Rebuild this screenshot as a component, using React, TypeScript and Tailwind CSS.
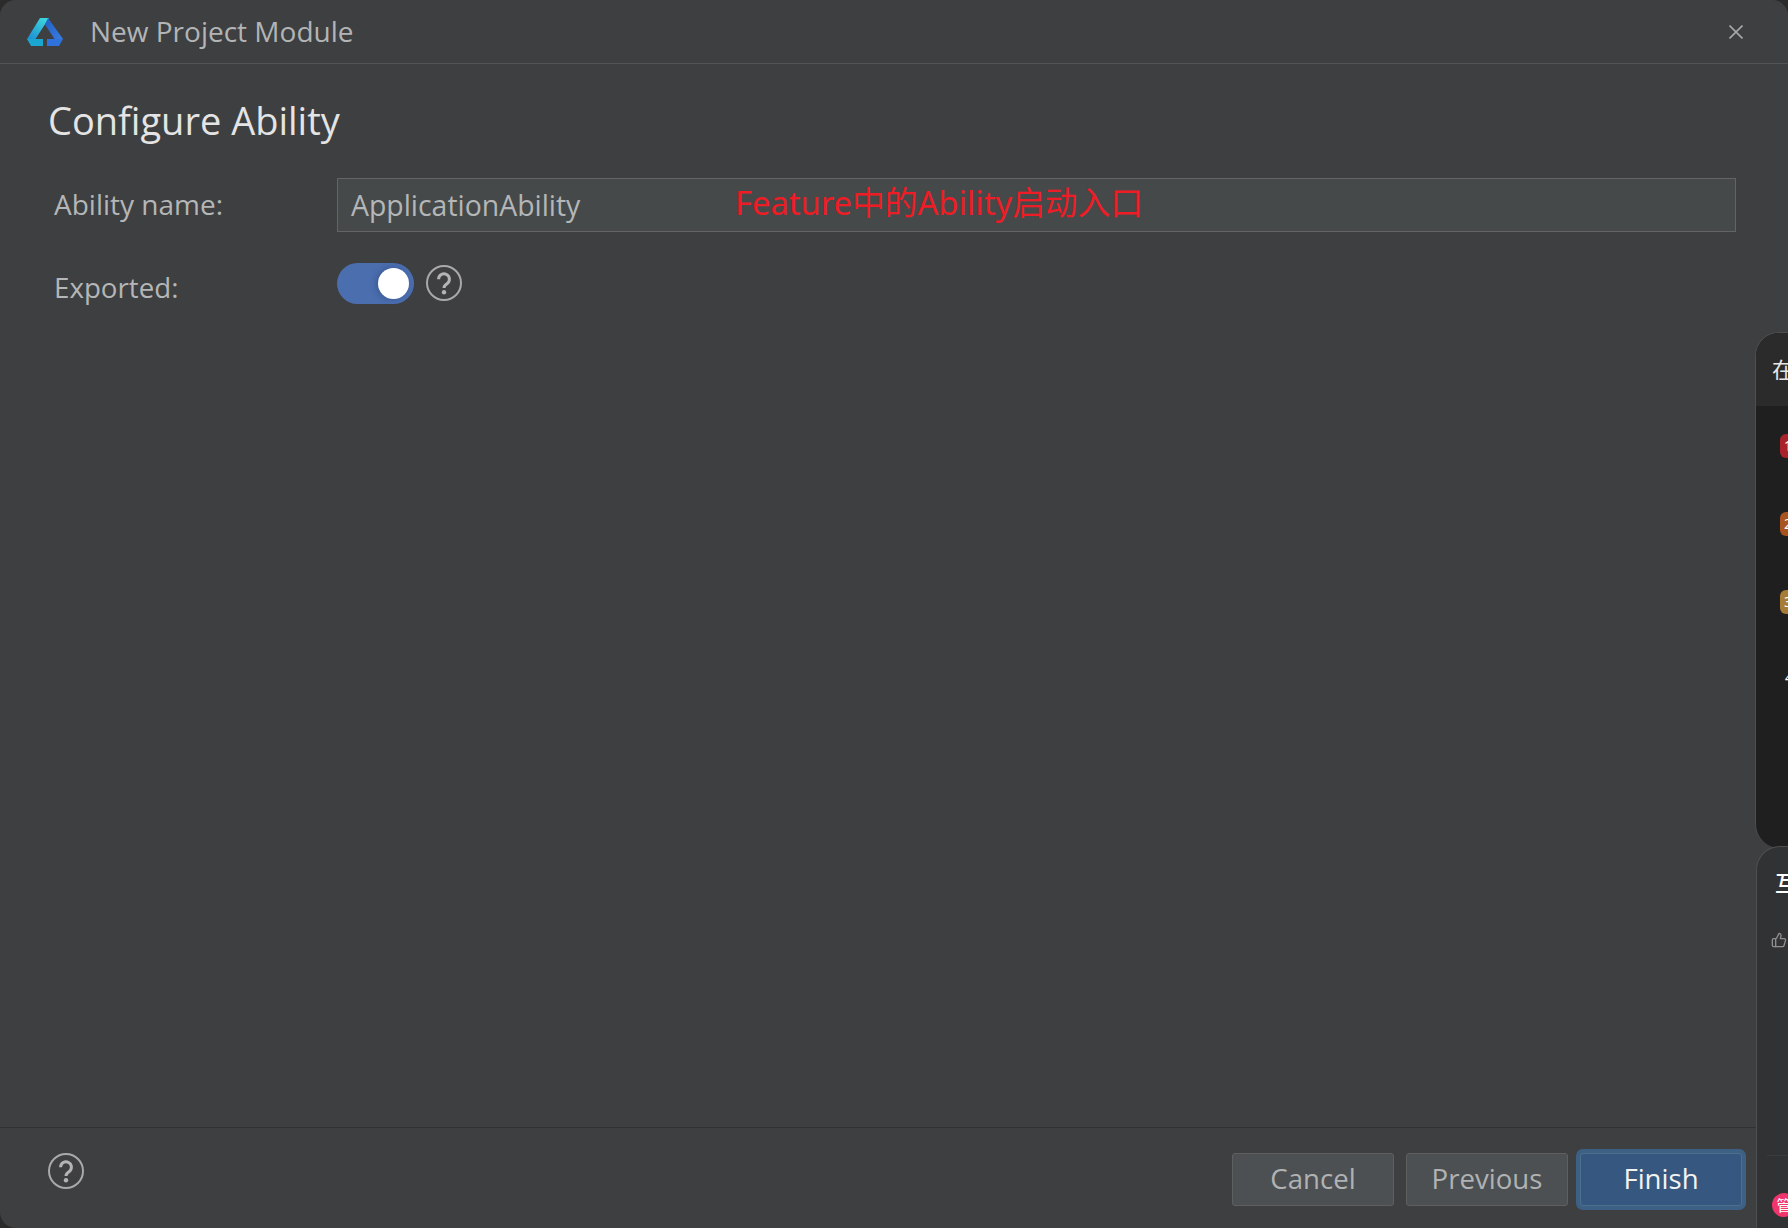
import { ThumbsUp } from 'lucide-react';

const uiFont = 'font-["Open_Sans",sans-serif]';
const cjkFont = 'font-["Noto_Sans","Noto_Sans_CJK_SC",sans-serif]';

function Logo() {
  return (
    <svg width="36" height="29" viewBox="0 0 36 29" className="shrink-0">
      <defs>
        <linearGradient id="leftArm" x1="0.8" y1="0" x2="0.1" y2="1">
          <stop offset="0" stopColor="#3dd6dc" />
          <stop offset="1" stopColor="#1d8fd4" />
        </linearGradient>
        <linearGradient id="rightArm" x1="0" y1="0" x2="1" y2="1">
          <stop offset="0" stopColor="#1f5fc4" />
          <stop offset="1" stopColor="#3a7ce0" />
        </linearGradient>
      </defs>
      <path d="M13 1h9L8.5 22H0z" fill="url(#leftArm)" />
      <path d="M0 22h16v7H4z" fill="#1ba6d0" />
      <path d="M21 1l15 21h-8.5L18 7.5z" fill="url(#rightArm)" />
      <path d="M20 22h16l-4 7H20z" fill="#2f72dc" />
    </svg>
  );
}

function HelpIcon() {
  return (
    <svg width="36" height="36" viewBox="0 0 36 36" fill="none" className="shrink-0">
      <circle cx="18" cy="18" r="17" stroke="#a9a9a9" strokeWidth="2" />
      <path d="M12.6 14.2a5.4 5.4 0 1 1 8.4 4.5c-2.1 1.4-3 2.2-3 4.3" stroke="#b4b4b4" strokeWidth="3" />
      <circle cx="18" cy="27.2" r="2.2" fill="#b4b4b4" />
    </svg>
  );
}

function Badge({ color, label }: { color: string; label: string }) {
  return (
    <div className={`w-8 h-6 rounded-md flex items-center pl-1 text-white text-sm ${color}`}>{label}</div>
  );
}

export default function App() {
  return (
    <div className="relative w-[1788px] h-[1228px] overflow-hidden bg-[#2b2b2b]">
      <div className={`flex flex-col h-full rounded-2xl bg-[#3e3f41] ${uiFont}`}>
        {/* Title bar */}
        <div className="flex items-center h-[64px] shrink-0 pl-[27px] pr-[45px] border-b border-[#525456] bg-[#3d3f41] rounded-t-2xl">
          <Logo />
          <span className="ml-[27px] pb-[2px] text-[28px] text-[#b2b4b5]">New Project Module</span>
          <svg width="14" height="14" viewBox="0 0 14 14" className="ml-auto">
            <path d="M0.5 0.5l13 13M13.5 0.5l-13 13" stroke="#a8a8a8" strokeWidth="1.6" />
          </svg>
        </div>

        {/* Form */}
        <div className="flex-1 px-[48px] pt-[31px]">
          <h1 className="h-[50px] text-[38px] leading-[50px] text-[#e4e4e4]">Configure Ability</h1>
          <div className="flex items-center mt-[33px] ml-[6px] mr-[4px]">
            <label className="w-[283px] shrink-0 pb-[2px] text-[28px] text-[#b4b6b7]">Ability name:</label>
            <div className="relative flex-1 flex items-center h-[54px] pl-[13px] bg-[#45494a] border border-[#646464] text-[28.4px] text-[#b4b6b7]">
              ApplicationAbility
              <span className={`absolute left-[397px] top-[1px] text-[32.7px] leading-[46px] text-[#ee1c25] ${cjkFont}`}>
                Feature中的Ability启动入口
              </span>
            </div>
          </div>
          <div className="flex items-center mt-[26px] ml-[6px]">
            <label className="w-[283px] shrink-0 pt-[9px] text-[27.7px] text-[#b4b6b7]">Exported:</label>
            <div className="flex items-center justify-end w-[77px] h-[41px] pr-[5px] rounded-full bg-[#4b6eaf]">
              <div className="w-[31px] h-[31px] rounded-full bg-white shadow-[-2px_0_6px_rgba(30,50,90,0.35)]" />
            </div>
            <div className="ml-[12px]">
              <HelpIcon />
            </div>
          </div>
        </div>

        {/* Footer */}
        <div className="flex items-start justify-between h-[101px] shrink-0 pl-[48px] pr-[46px] border-t border-[#323232]">
          <div className="pt-[25px]">
            <HelpIcon />
          </div>
          <div className="flex gap-3 pt-[25px]">
            <button className="w-[162px] h-[53px] pb-[2px] rounded-[3px] border border-[#5e6060] bg-[#4c5052] text-[27.6px] text-[#b0b2b3]">
              Cancel
            </button>
            <button className="w-[162px] h-[53px] pb-[2px] rounded-[3px] border border-[#5e6060] bg-[#4c5052] text-[27.6px] text-[#b0b2b3]">
              Previous
            </button>
            <button className="w-[162px] h-[53px] pb-[2px] rounded-[3px] border border-[#4c708c] bg-[#365880] text-[27.6px] text-[#f2f2f2] shadow-[0_0_0_4px_#3d6185]">
              Finish
            </button>
          </div>
        </div>
      </div>

      {/* Neighbouring page panels, cut off by the window edge */}
      <div className={`absolute left-[1755px] top-[332px] w-[200px] h-[516px] overflow-hidden rounded-tl-3xl rounded-bl-3xl border-l border-t border-[#4e4f50] bg-[#1f1f1f] ${cjkFont}`}>
        <div className="h-[73px] pl-4 pt-5 bg-[#2b2b2b] text-[22px] leading-8 text-[#e6e6e6]">在</div>
        <div className="flex flex-col gap-[54px] pl-[24px] pt-7">
          <Badge color="bg-[#a8232a]" label="1" />
          <Badge color="bg-[#a8541f]" label="2" />
          <Badge color="bg-[#a67c36]" label="3" />
        </div>
        <div className="pl-[29px] pt-[56px] text-sm leading-4 text-white">4</div>
      </div>
      <div className={`absolute left-[1756px] top-[846px] w-[200px] h-[382px] overflow-hidden rounded-tl-3xl border-l border-t border-[#4e4f50] bg-[#313233] ${cjkFont}`}>
        <div className="pl-[18px] pt-[19px] text-[22px] leading-8 font-medium text-white">互</div>
        <div className="pl-[14px] pt-[34px]">
          <ThumbsUp size={16} color="#8f8f8f" />
        </div>
        <div className="ml-[10px] mt-[207px] border-t border-[#3a3b3c]" />
        <div className="ml-[15px] mt-[37px] flex items-center justify-center w-6 h-6 rounded-full bg-[#f0346c] text-[15px] text-white">
          管
        </div>
      </div>
    </div>
  );
}
